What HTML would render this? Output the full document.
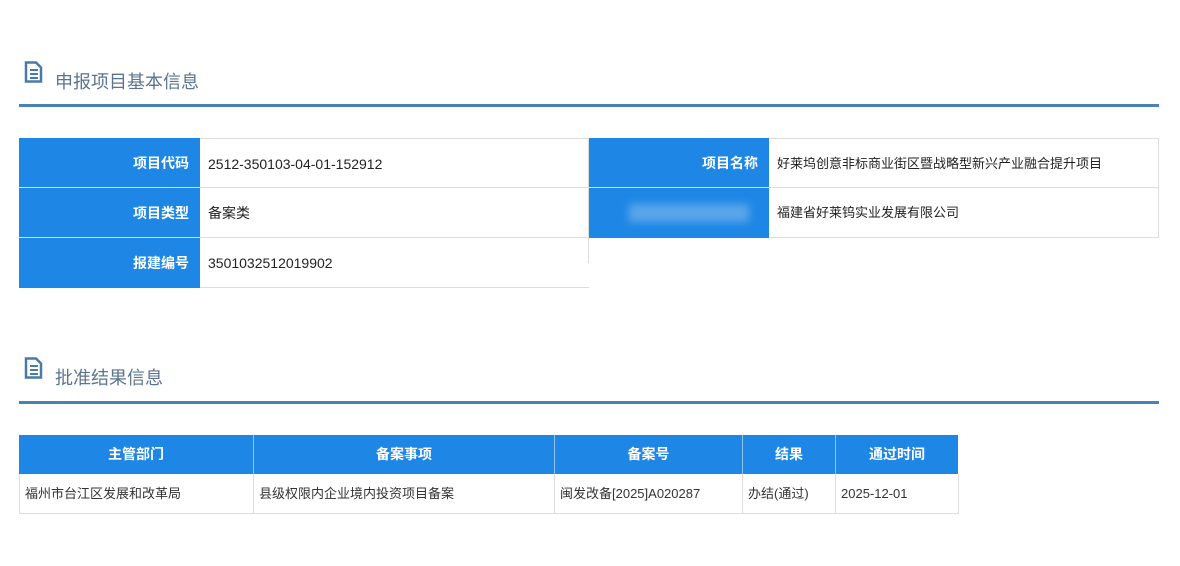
<!DOCTYPE html>
<html><head><meta charset="utf-8"><style>
body{margin:0;width:1180px;height:566px;background:#fff;position:relative;overflow:hidden;font-family:"Liberation Sans","Noto Sans CJK SC",sans-serif}
.a{position:absolute;box-sizing:border-box}
.t{font-size:18px;color:#5b7591;left:55px}
.ln{left:19px;width:1140px;height:3px;background:#4a82b8}
.lb{background:#1e87e6;color:#fff;font-weight:bold;font-size:14px;text-align:right;padding-right:11px;line-height:50px}
.v{font-size:14px;color:#222;padding-left:8px;line-height:50px;border-bottom:1px solid #ddd;border-right:1px solid #ddd;border-top:1px solid #ddd}
.h{background:#1e87e6;color:#fff;font-weight:bold;font-size:14px;text-align:center;line-height:39px;border-right:1px solid #8fc3f0;top:435px;height:39px}
.c{font-size:13px;color:#333;padding-left:5px;line-height:40px;top:474px;height:40px;border-bottom:1px solid #ddd;border-right:1px solid #ddd}
</style></head><body>
<svg class="a" style="left:24px;top:61px" width="20" height="22" viewBox="0 0 20 22"><path d="M2 1.5h10l5 5v14H2z" fill="none" stroke="#4a7ba8" stroke-width="2.5"/><path d="M6 9h8M6 13h8M6 17h8" stroke="#4a7ba8" stroke-width="2"/></svg>
<div class="a t" style="top:68px">申报项目基本信息</div>
<div class="a ln" style="top:104px"></div>
<div class="a lb" style="left:19px;top:138px;width:181px;height:50px;border-bottom:1px solid #cfe3f5">项目代码</div>
<div class="a v" style="left:200px;top:138px;width:389px;height:50px">2512-350103-04-01-152912</div>
<div class="a lb" style="left:589px;top:138px;width:180px;height:50px;border-bottom:1px solid #cfe3f5">项目名称</div>
<div class="a v" style="left:769px;top:138px;width:390px;height:50px;font-size:13px">好莱坞创意非标商业街区暨战略型新兴产业融合提升项目</div>
<div class="a lb" style="left:19px;top:188px;width:181px;height:50px;border-bottom:1px solid #cfe3f5">项目类型</div>
<div class="a v" style="left:200px;top:188px;width:389px;height:50px;border-top:0">备案类</div>
<div class="a" style="left:589px;top:188px;width:180px;height:50px;background:#1e87e6;overflow:hidden"><div style="position:absolute;left:40px;top:16px;width:120px;height:18px;background:#5aa5ea;filter:blur(4px)"></div></div>
<div class="a v" style="left:769px;top:188px;width:390px;height:50px;border-top:0;font-size:13px">福建省好莱钨实业发展有限公司</div>
<div class="a lb" style="left:19px;top:238px;width:181px;height:50px">报建编号</div>
<div class="a v" style="left:200px;top:238px;width:389px;height:50px;border-top:0;border-right:0">3501032512019902</div>
<div class="a" style="left:588px;top:238px;width:1px;height:25px;background:#ddd"></div>

<svg class="a" style="left:24px;top:357px" width="20" height="22" viewBox="0 0 20 22"><path d="M2 1.5h10l5 5v14H2z" fill="none" stroke="#4a7ba8" stroke-width="2.5"/><path d="M6 9h8M6 13h8M6 17h8" stroke="#4a7ba8" stroke-width="2"/></svg>
<div class="a t" style="top:364px">批准结果信息</div>
<div class="a ln" style="top:401px"></div>
<div class="a h" style="left:19px;width:235px">主管部门</div>
<div class="a h" style="left:254px;width:301px">备案事项</div>
<div class="a h" style="left:555px;width:188px">备案号</div>
<div class="a h" style="left:743px;width:93px">结果</div>
<div class="a h" style="left:836px;width:122px;border-right:0">通过时间</div>
<div class="a c" style="left:19px;width:235px;border-left:1px solid #ddd">福州市台江区发展和改革局</div>
<div class="a c" style="left:254px;width:301px">县级权限内企业境内投资项目备案</div>
<div class="a c" style="left:555px;width:188px">闽发改备[2025]A020287</div>
<div class="a c" style="left:743px;width:93px">办结(通过)</div>
<div class="a c" style="left:836px;width:123px">2025-12-01</div>
</body></html>
